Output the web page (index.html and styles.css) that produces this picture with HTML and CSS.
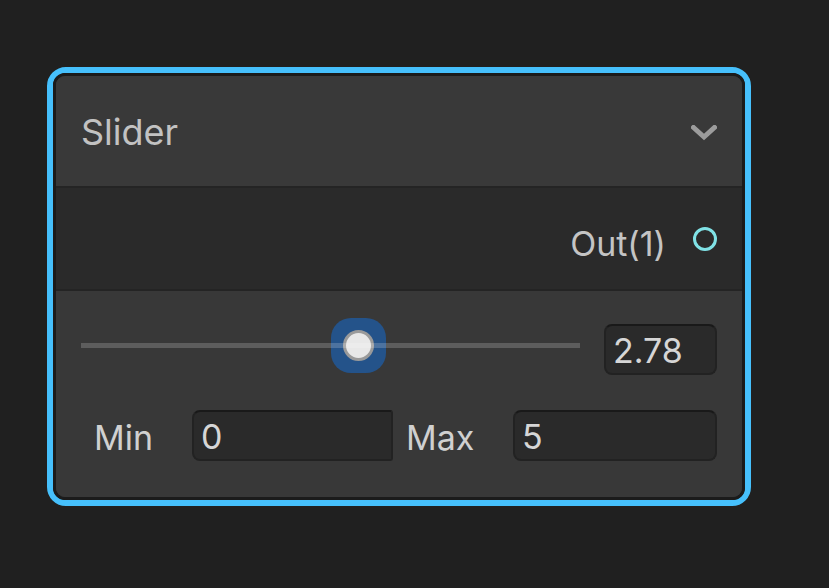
FILE: index.html
```html
<!DOCTYPE html>
<html>
<head>
<meta charset="utf-8">
<link rel="stylesheet" href="styles.css">
</head>
<body>
<div class="canvas">
  <div class="selection">
    <div class="node">
      <div class="header">
        <span class="title">Slider</span>
        <svg class="chevron" width="26" height="16" viewBox="0 0 26 16">
          <path d="M2.5 2.5 L13 12 L23.5 2.5" fill="none" stroke="#9c9c9c" stroke-width="5" stroke-linejoin="miter" stroke-linecap="square"/>
        </svg>
      </div>
      <div class="outputs">
        <span class="port-label">Out(1)</span>
        <span class="port"></span>
      </div>
      <div class="controls">
        <div class="slider-row">
          <div class="slider">
            <div class="track"></div>
            <div class="thumb" style="left:55.6%"><div class="knob"></div></div>
          </div>
          <div class="field value-field">2.78</div>
        </div>
        <div class="range-row">
          <span class="label min-label">Min</span>
          <div class="field min-field">0</div>
          <span class="label max-label">Max</span>
          <div class="field max-field">5</div>
        </div>
      </div>
    </div>
  </div>
</div>
</body>
</html>
```
FILE: styles.css
```css
* { box-sizing: border-box; }
html, body { margin: 0; padding: 0; }
body {
  background: #202020;
  width: 829px;
  height: 588px;
  overflow: hidden;
  font-family: Inter, "Noto Sans", sans-serif;
}
.canvas {
  padding: 67px 0 0 47px;
}
.selection {
  width: 704px;
  height: 439px;
  border: 6px solid #46c0fc;
  border-radius: 19px;
  background: #1b1b1b;
}
.node {
  height: 100%;
  border: 3px solid #1b1b1b;
  border-radius: 12px;
  overflow: hidden;
  display: flex;
  flex-direction: column;
  background: #383838;
}
.header {
  box-sizing: content-box;
  height: 110px;
  flex: none;
  background: #393939;
  border-bottom: 2px solid #242424;
  display: flex;
  align-items: center;
  justify-content: space-between;
  padding: 0 25px 0 25px;
}
.title {
  font-size: 36px;
  color: #c2c2c2;
  margin-top: 1px;
}
.chevron {
  display: block;
  margin-top: 4px;
}
.outputs {
  box-sizing: content-box;
  height: 101px;
  flex: none;
  background: #2a2a2a;
  border-bottom: 2px solid #242424;
  display: flex;
  align-items: center;
  justify-content: flex-end;
  padding: 0 25px 0 24px;
}
.port-label {
  font-size: 34px;
  color: #c4c4c4;
  margin-top: 9px;
  margin-right: 27px;
}
.port {
  width: 24px;
  height: 24px;
  border: 3px solid #80e2e6;
  border-radius: 50%;
  background: #2a2a2a;
  margin-top: 1px;
}
.controls {
  flex: 1;
  background: #383838;
  padding: 27px 25px 0 25px;
}
.slider-row {
  display: flex;
  align-items: flex-start;
  gap: 24px;
}
.slider {
  flex: 1;
  position: relative;
  height: 55px;
}
.track {
  position: absolute;
  left: 0;
  right: 0;
  top: 25px;
  height: 5px;
  background: rgba(255, 255, 255, 0.19);
  z-index: 2;
}
.thumb {
  position: absolute;
  top: 0;
  width: 55px;
  height: 55px;
  margin-left: -27.5px;
  border-radius: 20px;
  background: #24538a;
  z-index: 1;
  display: flex;
  align-items: center;
  justify-content: center;
}
.knob {
  position: relative;
  z-index: 3;
  width: 31px;
  height: 31px;
  border-radius: 50%;
  background: #e8e8e8;
  border: 3px solid #9a9a9a;
}
.field {
  height: 51px;
  background: #2a2a2a;
  border: 2px solid #222222;
  border-top-color: #191919;
  border-radius: 8px;
  color: #d6d6d6;
  font-size: 34px;
  display: flex;
  align-items: center;
  padding: 2px 0 0 7px;
}
.value-field {
  width: 113px;
  margin-top: 6px;
}
.range-row {
  display: flex;
  align-items: center;
  margin-top: 35px;
  padding-left: 13px;
}
.label {
  font-size: 34px;
  color: #d0d0d0;
  margin-top: 3px;
}
.min-label {
  width: 98px;
}
.min-field {
  width: 201px;
  border-radius: 8px 3px 3px 8px;
}
.max-label {
  width: 107px;
  margin-left: 13px;
}
.max-field {
  flex: 1;
}
```
